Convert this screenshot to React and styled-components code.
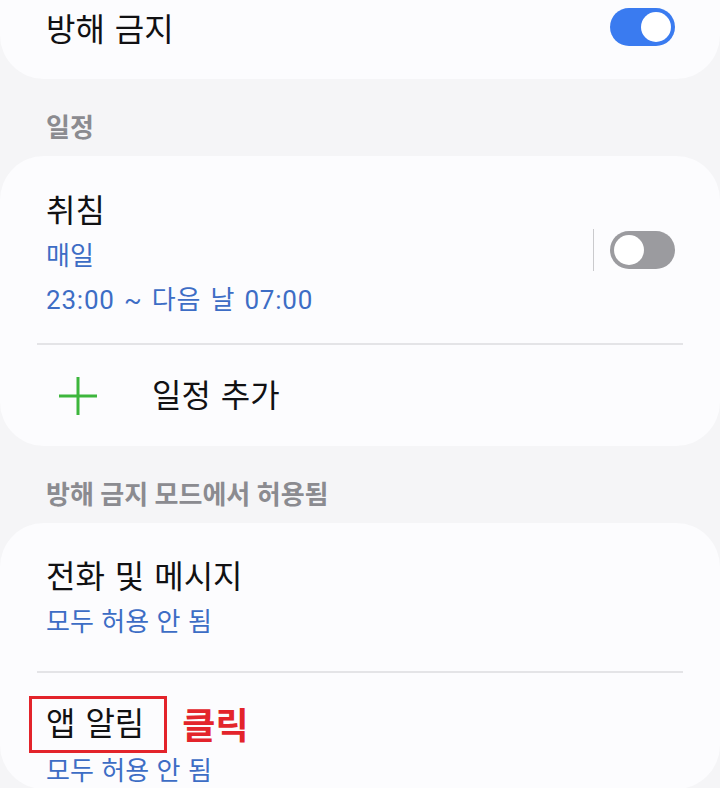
import React from "react";
import styled, { createGlobalStyle } from "styled-components";

const Global = createGlobalStyle`
  html, body { margin: 0; padding: 0; background: #f5f5f7; }
  body { font-family: Roboto, "Noto Sans CJK KR", sans-serif; overflow: hidden; }
  * { box-sizing: border-box; }
`;

const Page = styled.div`
  width: 720px;
  height: 788px;
  background: #f5f5f7;
  display: flex;
  flex-direction: column;
  overflow: hidden;
`;

const Card = styled.div`
  background: #fcfcfe;
  border-radius: ${(p) => (p.$cropped ? "0 0 44px 44px" : "44px")};
  display: flex;
  flex-direction: column;
  padding: ${(p) => p.$pad || "0"};
`;

const Row = styled.div`
  display: flex;
  align-items: center;
  padding: ${(p) => p.$pad || "0 45px 0 46px"};
  min-height: ${(p) => p.$h || "auto"};
`;

const TextCol = styled.div`
  flex: 1;
  display: flex;
  flex-direction: column;
  align-items: flex-start;
`;

const Title = styled.div`
  font-size: 32px;
  line-height: 46px;
  color: #111113;
  font-weight: 400;
  word-spacing: 2px;
  white-space: nowrap;
`;

const Sub = styled.div`
  font-size: 26px;
  line-height: ${(p) => p.$lh || "44px"};
  color: #3d6dc5;
  font-weight: 400;
  letter-spacing: ${(p) => (p.$time ? "0.8px" : "0")};
  word-spacing: ${(p) => (p.$time ? "2px" : "1px")};
  white-space: nowrap;
`;

const Header = styled.div`
  font-size: 26px;
  line-height: 34px;
  color: #8b8b90;
  font-weight: 700;
  padding: 32px 46px 11px;
  white-space: nowrap;
`;

const Divider = styled.div`
  height: 2px;
  background: #e4e4e7;
  margin: 0 37px;
`;

const VLine = styled.div`
  width: 1.5px;
  height: 42px;
  background: #cacacd;
  margin: 0 16px 10px 0;
`;

const Track = styled.div`
  width: 65px;
  height: 38px;
  border-radius: 19px;
  background: ${(p) => (p.$on ? "#3a7bf0" : "#9b9b9f")};
  display: flex;
  align-items: center;
  justify-content: ${(p) => (p.$on ? "flex-end" : "flex-start")};
  padding: 0 4px;
  margin-bottom: ${(p) => p.$mb || "0"};
`;

const Knob = styled.div`
  width: 30px;
  height: 30px;
  border-radius: 50%;
  background: #ffffff;
`;

const Toggle = ({ on, mb }) => (
  <Track $on={on} $mb={mb}>
    <Knob />
  </Track>
);

const PlusBox = styled.div`
  width: 106px;
  display: flex;
  align-items: center;
  padding-left: 13px;
`;

const Highlight = styled.div`
  display: flex;
  align-items: center;
  gap: 15px;
  margin-left: -17px;
`;

const Boxed = styled.div`
  border: 3px solid #e3242b;
  padding: 2px 20px 3px 14px;
`;

const Click = styled.div`
  font-size: 36px;
  line-height: 46px;
  font-weight: 700;
  color: #e3242b;
  margin-top: 4px;
`;

export default function App() {
  return (
    <Page>
      <Global />
      <Card $cropped $pad="0 0 19px 0">
        <Row $h="60px">
          <TextCol>
            <Title>방해 금지</Title>
          </TextCol>
          <Toggle on mb="6px" />
        </Row>
      </Card>

      <Header>일정</Header>
      <Card>
        <Row $pad="32px 45px 21px 46px">
          <TextCol>
            <Title>취침</Title>
            <Sub>매일</Sub>
            <Sub $time>23:00 ~ 다음 날 07:00</Sub>
          </TextCol>
          <VLine />
          <Toggle mb="10px" />
        </Row>
        <Divider />
        <Row $h="101px" $pad="0 45px 0 46px">
          <PlusBox>
            <svg width="38" height="38" viewBox="0 0 38 38">
              <path d="M19 0V38M0 19H38" stroke="#3db63d" strokeWidth="3" fill="none" />
            </svg>
          </PlusBox>
          <Title>일정 추가</Title>
        </Row>
      </Card>

      <Header>방해 금지 모드에서 허용됨</Header>
      <Card>
        <Row $pad="31px 45px 27px 46px">
          <TextCol>
            <Title>전화 및 메시지</Title>
            <Sub>모두 허용 안 됨</Sub>
          </TextCol>
        </Row>
        <Divider />
        <Row $pad="23px 45px 0 46px">
          <TextCol>
            <Highlight>
              <Boxed>
                <Title>앱 알림</Title>
              </Boxed>
              <Click>클릭</Click>
            </Highlight>
            <Sub $lh="36px">모두 허용 안 됨</Sub>
          </TextCol>
        </Row>
      </Card>
    </Page>
  );
}
